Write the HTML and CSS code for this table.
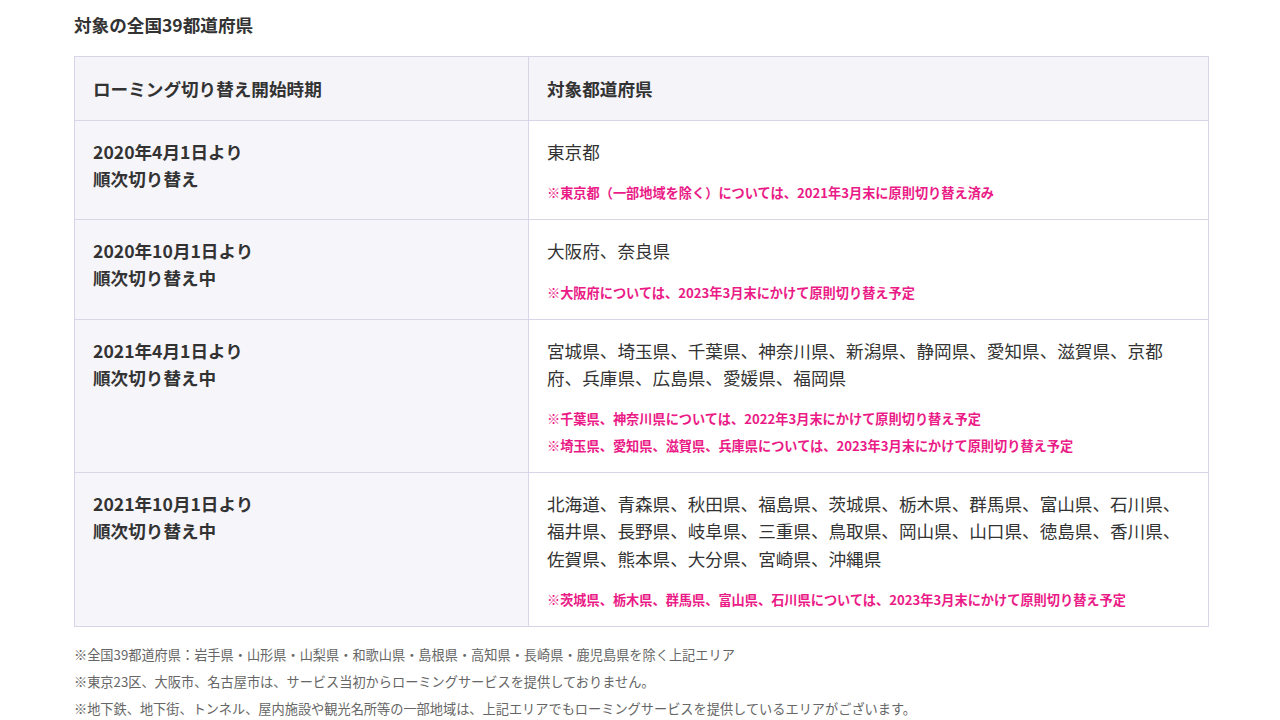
FILE: index.html
```html
<!DOCTYPE html>
<html lang="ja">
<head>
<meta charset="utf-8">
<link rel="stylesheet" href="styles.css">
</head>
<body>
<div class="page">
  <h2 class="title">対象の全国39都道府県</h2>
  <table class="area-table">
    <thead>
      <tr>
        <th class="col-date">ローミング切り替え開始時期</th>
        <th class="col-pref">対象都道府県</th>
      </tr>
    </thead>
    <tbody>
      <tr>
        <th class="col-date">2020年4月1日より<br>順次切り替え</th>
        <td class="col-pref">
          <p class="main">東京都</p>
          <p class="note">※東京都（一部地域を除く）については、2021年3月末に原則切り替え済み</p>
        </td>
      </tr>
      <tr>
        <th class="col-date">2020年10月1日より<br>順次切り替え中</th>
        <td class="col-pref">
          <p class="main">大阪府、奈良県</p>
          <p class="note">※大阪府については、2023年3月末にかけて原則切り替え予定</p>
        </td>
      </tr>
      <tr>
        <th class="col-date">2021年4月1日より<br>順次切り替え中</th>
        <td class="col-pref">
          <p class="main">宮城県、埼玉県、千葉県、神奈川県、新潟県、静岡県、愛知県、滋賀県、京都府、兵庫県、広島県、愛媛県、福岡県</p>
          <p class="note">※千葉県、神奈川県については、2022年3月末にかけて原則切り替え予定</p>
          <p class="note">※埼玉県、愛知県、滋賀県、兵庫県については、2023年3月末にかけて原則切り替え予定</p>
        </td>
      </tr>
      <tr>
        <th class="col-date">2021年10月1日より<br>順次切り替え中</th>
        <td class="col-pref">
          <p class="main">北海道、青森県、秋田県、福島県、茨城県、栃木県、群馬県、富山県、石川県、福井県、長野県、岐阜県、三重県、鳥取県、岡山県、山口県、徳島県、香川県、佐賀県、熊本県、大分県、宮崎県、沖縄県</p>
          <p class="note">※茨城県、栃木県、群馬県、富山県、石川県については、2023年3月末にかけて原則切り替え予定</p>
        </td>
      </tr>
    </tbody>
  </table>
  <ul class="footnotes">
    <li>※全国39都道府県：岩手県・山形県・山梨県・和歌山県・島根県・高知県・長崎県・鹿児島県を除く上記エリア</li>
    <li>※東京23区、大阪市、名古屋市は、サービス当初からローミングサービスを提供しておりません。</li>
    <li>※地下鉄、地下街、トンネル、屋内施設や観光名所等の一部地域は、上記エリアでもローミングサービスを提供しているエリアがございます。</li>
  </ul>
</div>
</body>
</html>
```
FILE: styles.css
```css
html, body {
  margin: 0;
  padding: 0;
  background: #ffffff;
}
body {
  font-family: "Noto Sans CJK JP", "Noto Sans", sans-serif;
  color: #333333;
}
.page {
  padding: 11px 72px 0 74px;
}
.title {
  margin: 0 0 18px 0;
  font-size: 17.6px;
  line-height: 27px;
  font-weight: 700;
  color: #333333;
}
.area-table {
  width: 1135px;
  border-collapse: collapse;
  table-layout: fixed;
}
.area-table th,
.area-table td {
  border: 1px solid #d6d6e6;
  text-align: left;
  vertical-align: top;
  font-size: 17.6px;
  line-height: 27px;
}
.area-table thead th {
  background: #f4f4f9;
  font-weight: 700;
  padding: 18px 18px 18px 18px;
}
.area-table thead .col-date {
  width: 417px;
}
.area-table tbody th {
  background: #f5f5fa;
  font-weight: 700;
  padding: 17px 18px 16px 18px;
}
.area-table tbody td {
  background: #ffffff;
  padding: 17px 18px 16px 18px;
}
.main {
  margin: 0;
  font-size: 17.6px;
  line-height: 1.55;
}
.note {
  margin: 7px 0 0 0;
  font-size: 13.2px;
  line-height: 20px;
  font-weight: 700;
  color: #ea1a86;
}
.main + .note {
  margin-top: 18px;
}
.footnotes {
  list-style: none;
  margin: 14px 0 0 0;
  padding: 0;
  font-size: 13.2px;
  line-height: 27px;
  color: #666666;
}
```
